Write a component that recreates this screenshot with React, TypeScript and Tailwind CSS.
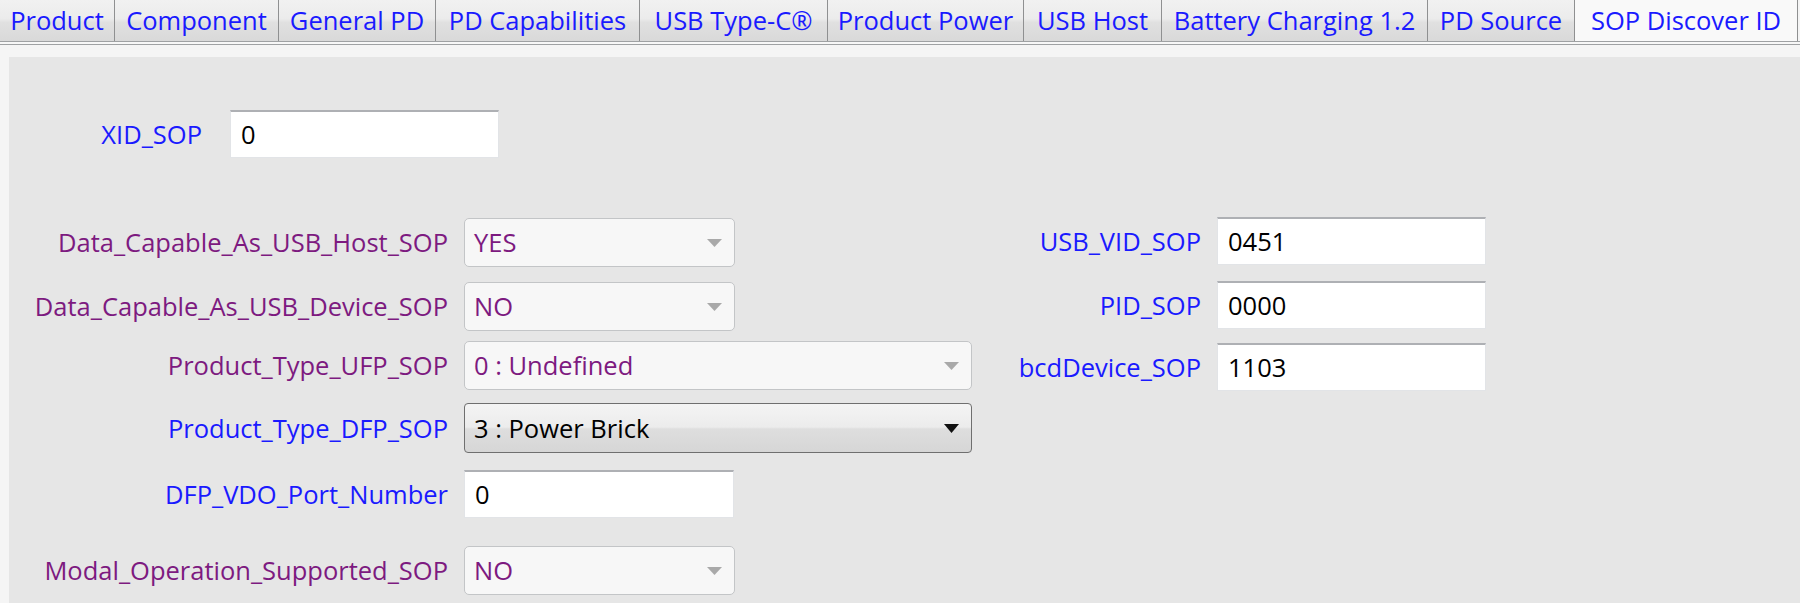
import React from "react"

const tabs = [
  { label: "Product", w: "w-[115px]" },
  { label: "Component", w: "w-[164px]" },
  { label: "General PD", w: "w-[157px]" },
  { label: "PD Capabilities", w: "w-[204px]" },
  { label: "USB Type-C®", w: "w-[188px]" },
  { label: "Product Power", w: "w-[196px]" },
  { label: "USB Host", w: "w-[138px]" },
  { label: "Battery Charging 1.2", w: "w-[266px]" },
  { label: "PD Source", w: "w-[147px]" },
]

const font = { fontFamily: '"Open Sans", "Noto Sans", sans-serif' }

function TextBox({ value, w = "w-[269px]" }: { value: string; w?: string }) {
  return (
    <div
      className={`${w} h-[48px] flex items-center pl-[10px] bg-white border border-[#e2e4e7] border-t-2 border-t-[#aeb0b4] text-[25.5px] text-black`}
    >
      {value}
    </div>
  )
}

function Combo({ value, wide, active }: { value: string; wide?: boolean; active?: boolean }) {
  if (active) {
    return (
      <div className="w-[508px] h-[50px] flex items-center justify-between pl-[9px] pr-[12px] rounded-[4px] border border-[#6f6f6f] bg-[linear-gradient(to_bottom,#f4f4f4_0%,#ececec_48%,#dedede_52%,#d6d6d6_100%)] text-[25.5px] text-black">
        <span>{value}</span>
        <svg width="15" height="9" viewBox="0 0 15 9">
          <polygon points="0,0 15,0 7.5,9" fill="#111" />
        </svg>
      </div>
    )
  }
  return (
    <div
      className={`${wide ? "w-[508px]" : "w-[271px]"} h-[49px] flex items-center justify-between pl-[9px] pr-[12px] rounded-[5px] border border-[#c3c5c7] bg-[#f7f7f7] text-[25.5px] text-[#7d1a80]`}
    >
      <span>{value}</span>
      <svg width="15" height="8" viewBox="0 0 15 8">
        <polygon points="0,0 15,0 7.5,8" fill="#a9a9a9" />
      </svg>
    </div>
  )
}

function Label({ text, purple, w }: { text: string; purple?: boolean; w: string }) {
  return (
    <div className={`${w} text-right text-[25.5px] ${purple ? "text-[#7d1a80]" : "text-[#1a1aff]"}`}>
      {text}
    </div>
  )
}

export default function App() {
  return (
    <div className="w-[1800px] h-[603px] overflow-hidden bg-[#f5f5f5] flex flex-col" style={font}>
      {/* Tab strip */}
      <div className="flex h-[41px] items-stretch">
        {tabs.map((t) => (
          <div
            key={t.label}
            className={`${t.w} flex items-center justify-center border-r border-[#8f9091] bg-[linear-gradient(to_bottom,#f1f1f1_0%,#ececec_45%,#e0e0e0_55%,#d9d9d9_100%)] text-[25.5px] text-[#1a1aff] leading-none`}
          >
            {t.label}
          </div>
        ))}
        <div className="w-[223px] flex items-center justify-center border-r border-[#8f9091] bg-[#f9f9f9] text-[25.5px] text-[#1a1aff] leading-none">
          SOP Discover ID
        </div>
        <div className="flex-1 bg-[#f5f5f5]" />
      </div>
      <div className="h-[4px] border-t border-b border-[#9fa1a3] bg-[#f7f7f7]" />

      {/* Content */}
      <div className="flex-1 pt-[12px] pl-[9px]">
        <div className="h-full bg-[#e6e6e6] pt-[53px]">
          <div className="flex items-center">
            <Label text="XID_SOP" w="w-[193px]" />
            <div className="ml-[28px]">
              <TextBox value="0" />
            </div>
          </div>

          <div className="flex mt-[60px]">
            {/* left column */}
            <div className="w-[963px] flex flex-col">
              <div className="flex items-center gap-4">
                <Label text="Data_Capable_As_USB_Host_SOP" purple w="w-[439px]" />
                <Combo value="YES" />
              </div>
              <div className="flex items-center gap-4 mt-[15px]">
                <Label text="Data_Capable_As_USB_Device_SOP" purple w="w-[439px]" />
                <Combo value="NO" />
              </div>
              <div className="flex items-center gap-4 mt-[10px]">
                <Label text="Product_Type_UFP_SOP" purple w="w-[439px]" />
                <Combo value="0 : Undefined" wide />
              </div>
              <div className="flex items-center gap-4 mt-[13px]">
                <Label text="Product_Type_DFP_SOP" w="w-[439px]" />
                <Combo value="3 : Power Brick" active />
              </div>
              <div className="flex items-center gap-4 mt-[17px]">
                <Label text="DFP_VDO_Port_Number" w="w-[439px]" />
                <TextBox value="0" w="w-[270px]" />
              </div>
              <div className="flex items-center gap-4 mt-[28px]">
                <Label text="Modal_Operation_Supported_SOP" purple w="w-[439px]" />
                <Combo value="NO" />
              </div>
            </div>

            {/* right column */}
            <div className="flex flex-col -mt-px">
              <div className="flex items-center gap-4">
                <Label text="USB_VID_SOP" w="w-[229px]" />
                <TextBox value="0451" />
              </div>
              <div className="flex items-center gap-4 mt-[16px]">
                <Label text="PID_SOP" w="w-[229px]" />
                <TextBox value="0000" />
              </div>
              <div className="flex items-center gap-4 mt-[14px]">
                <Label text="bcdDevice_SOP" w="w-[229px]" />
                <TextBox value="1103" />
              </div>
            </div>
          </div>
        </div>
      </div>
    </div>
  )
}
